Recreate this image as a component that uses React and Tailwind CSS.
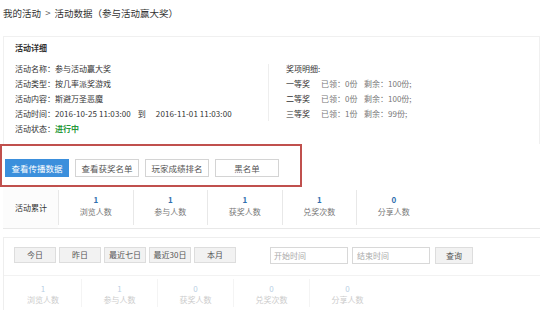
const FONT = { fontFamily: '"Noto Sans CJK SC", "Noto Sans", sans-serif' };

const detailRows = [
  { label: "活动名称：", value: "参与活动赢大奖" },
  { label: "活动类型：", value: "按几率派奖游戏" },
  { label: "活动内容：", value: "斯避万圣恶魔" },
];

const prizes = [
  { name: "一等奖", got: "0份", left: "100份;" },
  { name: "二等奖", got: "0份", left: "100份;" },
  { name: "三等奖", got: "1份", left: "99份;" },
];

const totals = [
  { value: "1", label: "浏览人数" },
  { value: "1", label: "参与人数" },
  { value: "1", label: "获奖人数" },
  { value: "1", label: "兑奖次数" },
  { value: "0", label: "分享人数" },
];

const ranged = [
  { value: "1", label: "浏览人数" },
  { value: "1", label: "参与人数" },
  { value: "0", label: "获奖人数" },
  { value: "0", label: "兑奖次数" },
  { value: "0", label: "分享人数" },
];

export default function App() {
  return (
    <div className="w-[551px] h-[310px] overflow-hidden bg-white text-[#333]" style={FONT}>
      {/* Breadcrumb */}
      <div className="h-[36px] pl-[3px] pt-[6px] text-[9.5px] leading-[14px] text-[#333]">
        我的活动 <span className="mx-[2px] text-[#666]">&gt;</span> 活动数据（参与活动赢大奖）
      </div>

      {/* Detail card */}
      <div className="ml-[3px] w-[537px] border-t border-l border-r border-[#f0f0f0] pt-[5px] pb-[8px]">
        <div className="pl-[11px] text-[8px] leading-[12px] font-bold text-[#333]">活动详细</div>
        <div className="flex mt-[7px]">
          <div className="w-[264px] pl-[11px] text-[8px] leading-[15px]">
            {detailRows.map((r) => (
              <div key={r.label} className="h-[15px] whitespace-nowrap">
                <span>{r.label}</span>
                <span>{r.value}</span>
              </div>
            ))}
            <div className="h-[15px] whitespace-nowrap">
              <span>活动时间：</span>
              <span className="tracking-[0.1px]">2016-10-25 11:03:00</span>
              <span className="ml-[7px]">到</span>
              <span className="ml-[10px] tracking-[0.1px]">2016-11-01 11:03:00</span>
            </div>
            <div className="h-[15px] whitespace-nowrap">
              <span>活动状态：</span>
              <span className="font-bold text-[#2a9a3c]">进行中</span>
            </div>
          </div>
          <div className="w-px h-[57px] mt-[3px] bg-[#eeeeee]" />
          <div className="pl-[17px] text-[8px] leading-[15px]">
            <div className="h-[15px]">奖项明细:</div>
            {prizes.map((p) => (
              <div key={p.name} className="h-[15px] flex whitespace-nowrap">
                <span className="w-[35px]">{p.name}</span>
                <span className="w-[43px] text-[#777]">已领：{p.got}</span>
                <span className="text-[#777]">剩余：{p.left}</span>
              </div>
            ))}
          </div>
        </div>
      </div>

      {/* Action buttons (highlighted) */}
      <div className="w-[302px] h-[43px] border-2 border-[#c0504d] pt-[13px] pl-[3px] flex gap-[6px]">
        <button className="w-[64px] h-[18px] bg-[#3b8fdc] text-white text-[8.5px] leading-[18px]">
          查看传播数据
        </button>
        <button className="w-[64px] h-[18px] border border-[#d4d4d4] bg-white text-[#555] text-[8.5px] leading-[16px]">
          查看获奖名单
        </button>
        <button className="w-[64px] h-[18px] border border-[#d4d4d4] bg-white text-[#555] text-[8.5px] leading-[16px]">
          玩家成绩排名
        </button>
        <button className="w-[64px] h-[18px] border border-[#d4d4d4] bg-white text-[#555] text-[8.5px] leading-[16px]">
          黑名单
        </button>
      </div>

      {/* Totals row */}
      <div className="ml-[3px] w-[537px] h-[42px] flex border-b border-[#e8e8e8]">
        <div className="w-[55px] pl-[12px] flex items-center text-[8px] text-[#333] bg-[#fcfcfc]">
          活动累计
        </div>
        {totals.map((t, i) => (
          <div key={i} className="w-[74.5px] my-[3px] border-l border-[#e8e8e8] flex flex-col items-center pt-[4px]">
            <div className="text-[8px] leading-[11px] font-bold text-[#2f6fae]">{t.value}</div>
            <div className="text-[8px] leading-[13px] text-[#777]">{t.label}</div>
          </div>
        ))}
      </div>

      {/* Date range card */}
      <div className="ml-[3px] mt-[8px] w-[537px] border-t border-l border-[#eeeeee]">
        <div className="h-[38px] pt-[9px] pl-[10px] flex border-b border-[#f2f2f2]">
          <div className="flex gap-[3px]">
            {["今日", "昨日", "最近七日", "最近30日", "本月"].map((d) => (
              <button
                key={d}
                className="w-[42px] h-[16px] border border-[#dddddd] bg-[#f2f2f2] text-[8px] leading-[14px] text-[#555]"
              >
                {d}
              </button>
            ))}
          </div>
          <div className="ml-[34px] flex gap-[4px]">
            <div className="w-[78px] h-[17px] border border-[#d8d8d8] pl-[3px] text-[8px] leading-[15px] text-[#aaa]">
              开始时间
            </div>
            <div className="w-[78px] h-[17px] border border-[#d8d8d8] pl-[4px] text-[8px] leading-[15px] text-[#aaa]">
              结束时间
            </div>
            <button className="ml-[1px] w-[38px] h-[17px] border border-[#dddddd] bg-[#f2f2f2] text-[8px] leading-[15px] text-[#555]">
              查询
            </button>
          </div>
        </div>
        <div className="h-[34px] flex pl-[1px]">
          {ranged.map((t, i) => (
            <div
              key={i}
              className={`w-[76px] my-[3px] flex flex-col items-center pt-[4px] ${i > 0 ? "border-l border-[#f4f4f4]" : ""}`}
            >
              <div className="text-[8px] leading-[11px] text-[#b9cfe4]">{t.value}</div>
              <div className="text-[8px] leading-[12px] text-[#cccccc]">{t.label}</div>
            </div>
          ))}
        </div>
      </div>
    </div>
  );
}
